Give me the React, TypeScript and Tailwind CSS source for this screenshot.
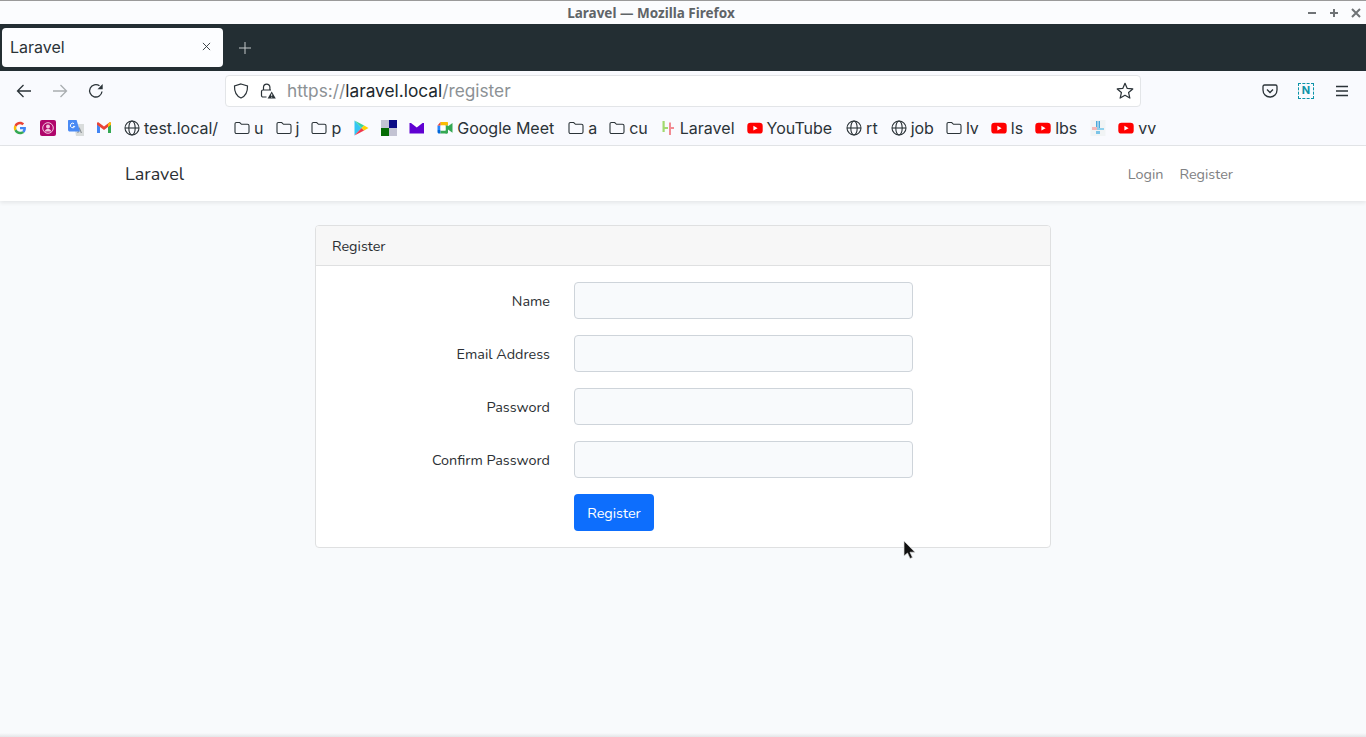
import React from 'react';

const Folder = () => (
  <svg width="16" height="16" viewBox="0 0 16 16" fill="none" stroke="#2b3338" strokeWidth="1.100">
    <path d="M1 3.800C1 3 1.600 2.500 2.400 2.500h3.300l1.800 1.800h6c.9 0 1.500.6 1.500 1.500v6.200c0 .9-.6 1.500-1.500 1.500h-11C1.600 13.500 1 12.900 1 12z" />
  </svg>
);

const Globe = () => (
  <svg width="16" height="16" viewBox="0 0 16 16" fill="none" stroke="#2b3338" strokeWidth="1.100">
    <circle cx="8" cy="8" r="7" />
    <ellipse cx="8" cy="8" rx="3.200" ry="7" />
    <path d="M1 8h14" />
  </svg>
);

const YouTube = () => (
  <svg width="16" height="16" viewBox="0 0 16 16">
    <rect x="0.300" y="2.800" width="15.400" height="10.800" rx="3.200" fill="#ff0000" />
    <path d="M6.400 5.800v4.800l4.200-2.400z" fill="#fff" />
  </svg>
);

const GoogleG = () => (
  <svg width="16" height="16" viewBox="-7 -7 62 62">
    <path fill="#EA4335" d="M24 9.500c3.500 0 6.700 1.300 9.100 3.500l6.800-6.800C35.800 2.400 30.200 0 24 0 14.600 0 6.500 5.400 2.600 13.200l7.900 6.200C12.400 13.600 17.700 9.500 24 9.500z" />
    <path fill="#4285F4" d="M47 24.500c0-1.600-.1-3.100-.4-4.500H24v9h12.900c-.6 3-2.200 5.500-4.700 7.200l7.700 6c4.500-4.200 7.100-10.300 7.100-17.700z" />
    <path fill="#FBBC05" d="M10.500 28.600c-.5-1.400-.8-3-.8-4.600s.3-3.200.8-4.600l-7.900-6.200C.9 16.500 0 20.100 0 24s.9 7.500 2.600 10.800z" />
    <path fill="#34A853" d="M24 48c6.500 0 11.900-2.100 15.900-5.800l-7.700-6c-2.200 1.400-4.900 2.300-8.200 2.300-6.300 0-11.600-4.100-13.500-9.900l-7.900 6.100C6.500 42.600 14.600 48 24 48z" />
  </svg>
);

const Podcast = () => (
  <svg width="16" height="16" viewBox="0 0 16 16">
    <rect width="16" height="16" rx="2" fill="#b0066c" />
    <circle cx="8" cy="8" r="5.300" fill="none" stroke="#f3c6df" strokeWidth="1" />
    <circle cx="8" cy="6.400" r="2" fill="#f3c6df" />
    <path d="M4.600 11.500c.6-1.900 2-2.700 3.400-2.700s2.800.8 3.400 2.700z" fill="#f3c6df" />
  </svg>
);

const Translate = () => (
  <svg width="16" height="16" viewBox="0 0 16 16">
    <path d="M6 4h10v12H8z" fill="#d9dcdc" />
    <path d="M11.500 7l2.500 6h-1.200l-1.300-3.400L10.300 13H9.200z" fill="#8a9094" />
    <path d="M1 0h7.600L12 11.500H1.800C.8 11.500 0 10.700 0 9.700V1C0 .4.400 0 1 0z" fill="#4a8af4" />
    <path d="M6 3.600a2.300 2.300 0 1 0 .8 2.800H5" fill="none" stroke="#fff" strokeWidth="1" />
  </svg>
);

const Gmail = () => (
  <svg width="16" height="16" viewBox="0 0 16 16">
    <path d="M1 3.500v9.500h3V7z" fill="#4285f4" />
    <path d="M12 7v6h3V3.500z" fill="#34a853" />
    <path d="M1 3.200c0-.9 1-1.400 1.700-.8L8 6.500l5.300-4.100c.7-.6 1.700-.1 1.700.8v1.600L8 10 4 7 1 4.800z" fill="#ea4335" />
    <path d="M12 3.900l1.300-1.500c.7-.6 1.700-.1 1.700.8v1.600L12 7z" fill="#fbbc05" />
  </svg>
);

const Play = () => (
  <svg width="16" height="16" viewBox="0 0 16 16">
    <path d="M1.500 0.500v7.500h7z" fill="#33c6f4" />
    <path d="M1.500 15.500V8h7z" fill="#33c6f4" />
    <path d="M1.500 0.500L8.500 8l2.600-2.600z" fill="#3ad29f" />
    <path d="M1.500 15.500L8.500 8l2.600 2.600z" fill="#f0384c" />
    <path d="M11.100 5.400L15.500 8l-4.400 2.600L8.500 8z" fill="#ffd200" />
  </svg>
);

const Squares = () => (
  <svg width="16" height="16" viewBox="0 0 16 16">
    <rect width="8" height="8" fill="#c3c3d3" />
    <rect x="8" width="8" height="8" fill="#0b0b84" />
    <rect y="8" width="8" height="8" fill="#056b05" />
    <rect x="8" y="8" width="8" height="8" fill="#c3c3d3" />
  </svg>
);

const Mail = () => (
  <svg width="16" height="16" viewBox="0 0 16 16">
    <rect x="0.500" y="3" width="14.500" height="10.500" fill="#6001d2" />
    <path d="M2 3h11.500L7.750 7.500z" fill="#fff" />
  </svg>
);

const Meet = () => (
  <svg width="16" height="16" viewBox="0 0 16 16">
    <path d="M3.500 2H10v3.500H3.500z" fill="#fbbc04" />
    <path d="M0.500 5.500H3.500v4.500H0.500z" fill="#2684fc" />
    <path d="M3.500 2v3.500H0.500z" fill="#ea4335" />
    <path d="M0.500 10h3v3.500H2c-.9 0-1.500-.6-1.500-1.500z" fill="#0066da" />
    <path d="M3.500 10.500H10v3H3.500z" fill="#34a853" />
    <path d="M10 2c.6 0 1 .4 1 1v2.500H8.500V2z" fill="#fbbc04" />
    <path d="M8.500 5.500H11v7c0 .6-.4 1-1 1H8.500z" fill="#34a853" />
    <path d="M11 6.300l4.500-3.300v9.800L11 9.500z" fill="#34a853" />
    <rect x="3.500" y="5.500" width="5" height="5" fill="#fff" />
  </svg>
);

const LaravelH = () => (
  <svg width="16" height="16" viewBox="0 0 16 16">
    <path d="M2.500 1h2.200v6H8v2H4.700v3H2.500z" fill="#a2d96f" />
    <path d="M9 2.500h2v4.500h3v2h-3v6H9z" fill="#f28b93" />
  </svg>
);

const Slack = () => (
  <svg width="16" height="16" viewBox="0 0 16 16">
    <rect x="0.500" y="0" width="15" height="16" fill="#f1f4f5" />
    <rect x="6" y="1" width="1.500" height="7" fill="#4aa8dc" />
    <rect x="8.500" y="1" width="1.500" height="7" fill="#4aa8dc" />
    <rect x="2" y="7" width="5" height="3" fill="#f3b7b7" />
    <rect x="7" y="8" width="7" height="2" fill="#8fd0ec" />
    <rect x="6" y="11" width="4" height="3" fill="#7cc4e8" />
  </svg>
);

// extra: some labels run a little wider in the reference
const bookmarks: { icon: React.ReactNode; label?: string; extra?: string }[] = [
  { icon: <GoogleG /> },
  { icon: <Podcast /> },
  { icon: <Translate /> },
  { icon: <Gmail /> },
  { icon: <Globe />, label: 'test.local/', extra: 'mr-[4px]' },
  { icon: <Folder />, label: 'u' },
  { icon: <Folder />, label: 'j' },
  { icon: <Folder />, label: 'p' },
  { icon: <Play /> },
  { icon: <Squares /> },
  { icon: <Mail /> },
  { icon: <Meet />, label: 'Google Meet', extra: 'mr-[2px]' },
  { icon: <Folder />, label: 'a' },
  { icon: <Folder />, label: 'cu' },
  { icon: <LaravelH />, label: 'Laravel' },
  { icon: <YouTube />, label: 'YouTube', extra: 'mr-[2px]' },
  { icon: <Globe />, label: 'rt', extra: 'mr-[1px]' },
  { icon: <Globe />, label: 'job' },
  { icon: <Folder />, label: 'lv' },
  { icon: <YouTube />, label: 'ls' },
  { icon: <YouTube />, label: 'lbs', extra: 'mr-[1px]' },
  { icon: <Slack /> },
  { icon: <YouTube />, label: 'vv' },
];

const fields = ['Name', 'Email Address', 'Password', 'Confirm Password'];

const Toolbar = () => (
  <div className="flex h-[39px] items-center bg-[#f9fafe]">
    <div className="flex w-[225px] items-center gap-[20px] pl-[16px]">
      {/* Back, forward, reload */}
      <svg width="16" height="16" viewBox="0 0 16 16" fill="none" stroke="#2b3338" strokeWidth="1.300">
        <path d="M15 8H1.500M7.500 2L1.500 8l6 6" />
      </svg>
      <svg width="16" height="16" viewBox="0 0 16 16" fill="none" stroke="#a9adb0" strokeWidth="1.300">
        <path d="M1 8h13.500M8.500 2l6 6-6 6" />
      </svg>
      <svg width="16" height="16" viewBox="0 0 16 16" fill="none" stroke="#2b3338" strokeWidth="1.300">
        <path d="M14 8.500A6.200 6.200 0 1 1 11.500 2.800" />
        <path d="M14.700 1v5.200H9.500z" fill="#2b3338" stroke="none" />
      </svg>
    </div>
    {/* URL bar */}
    <div className="flex h-[32px] w-[916px] items-center rounded-[4px] border border-[#e3e5e8] bg-white px-[7px]">
      <svg width="16" height="16" viewBox="0 0 16 16" fill="none" stroke="#2b3338" strokeWidth="1.200">
        <path d="M8 1l6.500 2c.2 5.500-1.300 9.800-6.500 12C2.800 12.800 1.300 8.500 1.500 3z" />
      </svg>
      <svg className="ml-[11px]" width="16" height="16" viewBox="0 0 16 16" fill="none" stroke="#2b3338" strokeWidth="1.200">
        <path d="M3.500 7V4.300a3.200 3.200 0 0 1 6.400 0V7" />
        <path d="M6.500 14H3A1.500 1.500 0 0 1 1.500 12.500V8.500A1.500 1.500 0 0 1 3 7h8" />
        <path d="M11.700 8.500l4.100 7H7.600z" fill="#2b3338" stroke="none" />
        <path d="M11.700 10.800v2.200M11.700 13.800v.8" stroke="#fff" strokeWidth="0.900" />
      </svg>
      <div className="ml-[11px] flex-1 font-['Inter',sans-serif] text-[17.300px] leading-[28px] text-[#8c9195]">
        https://<span className="text-[#20282d]">laravel.local</span>/register
      </div>
      <svg className="mr-[-1px]" width="18" height="18" viewBox="0 0 16 16" fill="none" stroke="#2b3338" strokeWidth="1.100">
        <path d="M8 1.200l2 4.500 4.900.5-3.700 3.200 1.100 4.900L8 11.800l-4.300 2.500 1.100-4.900L1.100 6.200 6 5.700z" strokeLinejoin="round" />
      </svg>
    </div>
    {/* Pocket, extension, menu */}
    <div className="flex flex-1 items-center justify-end gap-[20px] pr-[16px]">
      <svg width="16" height="16" viewBox="0 0 16 16" fill="none" stroke="#2b3338" strokeWidth="1.300">
        <path d="M2.500 2h11C14.400 2 15 2.600 15 3.500V7c0 4-3 7-7 7s-7-3-7-7V3.500C1 2.600 1.600 2 2.500 2z" />
        <path d="M5 6.500L8 9.500l3-3" />
      </svg>
      <div className="flex h-[16px] w-[16px] items-center justify-center border border-dashed border-[#0d93a8] font-['Inter',sans-serif] text-[11px] leading-none font-bold text-[#0d93a8]">
        N
      </div>
      <svg width="16" height="16" viewBox="0 0 16 16" fill="none" stroke="#2b3338" strokeWidth="1.300">
        <path d="M2 3.500h12M2 8h12M2 12.500h12" />
      </svg>
    </div>
  </div>
);

export default function App() {
  return (
    <div className="relative flex h-[737px] w-full flex-col overflow-hidden bg-[#f8fafc]">
      {/* Window title */}
      <div className="flex h-[24px] items-center border-t border-[#9a9a9a] bg-[#fbfcfe]">
        <div className="w-[36px]" />
        <div className="flex-1 pt-[2px] text-center font-['Noto_Sans',sans-serif] text-[13.500px] font-bold text-[#5f6468]">
          Laravel — Mozilla Firefox
        </div>
        <div className="flex w-[100px] items-center justify-end gap-[10px] pr-[4px]">
          <svg width="12" height="12" viewBox="0 0 12 12" stroke="#6f7376" strokeWidth="2"><path d="M2 6h8" /></svg>
          <svg width="12" height="12" viewBox="0 0 12 12" stroke="#6f7376" strokeWidth="2"><path d="M2 6h8M6 2v8" /></svg>
          <svg width="12" height="12" viewBox="0 0 12 12" stroke="#6f7376" strokeWidth="2"><path d="M2 2l8 8M10 2l-8 8" /></svg>
        </div>
      </div>

      {/* Tab strip */}
      <div className="flex h-[47px] items-center bg-[#232e33] pl-[2px]">
        <div className="flex h-[39px] w-[221px] items-center justify-between rounded-[4px] bg-[#fcfdff] pr-[12px] pb-[2px] pl-[8px]">
          <span className="font-['Inter',sans-serif] text-[16px] text-[#2b3338]">Laravel</span>
          <svg width="9" height="9" viewBox="0 0 10 10" stroke="#2b3338" strokeWidth="1"><path d="M1 1l8 8M9 1l-8 8" /></svg>
        </div>
        <svg className="ml-[15px]" width="14" height="14" viewBox="0 0 14 14" stroke="#c4c8ca" strokeWidth="1"><path d="M1 7h12M7 1v12" /></svg>
      </div>

      <Toolbar />

      {/* Bookmarks */}
      <div className="flex h-[36px] items-center gap-[12px] border-b border-[#e3e5e8] bg-[#f9fafe] pl-[12px] font-['Inter',sans-serif] text-[16px] text-[#2b3338]">
        {bookmarks.map((b, i) => (
          <div key={i} className={`flex items-center gap-[4px] whitespace-nowrap ${b.extra ?? ''}`}>
            {b.icon}
            {b.label && <span>{b.label}</span>}
          </div>
        ))}
      </div>

      {/* Page navbar */}
      <nav className="flex h-[55px] items-center justify-between bg-white pt-[2px] pr-[133px] pl-[125px] font-['Nunito','Lato',sans-serif] shadow-[0_2px_4px_rgba(0,0,0,0.08)]">
        <span className="text-[18px] text-[#2b2f33]">Laravel</span>
        <div className="flex gap-[16px] text-[14.400px] text-[#7f8183]">
          <span>Login</span>
          <span>Register</span>
        </div>
      </nav>

      {/* Register card */}
      <div className="flex justify-center pt-[24px] font-['Nunito','Lato',sans-serif] text-[14.400px] text-[#2b2f33]">
        <div className="w-[736px] overflow-hidden rounded-[4px] border border-[#dfe0e1] bg-white">
          <div className="flex h-[40px] items-center border-b border-[#dfe0e1] bg-[#f7f7f7] pt-[2px] pl-[16px]">Register</div>
          <div className="flex flex-col gap-[16px] p-[16px]">
            {fields.map(f => (
              <div key={f} className="flex items-center">
                <label className="w-[218px] pt-[2px] text-right">{f}</label>
                <input className="ml-[24px] h-[37px] w-[339px] rounded-[4px] border border-[#ced4da] bg-[#f8fafc]" />
              </div>
            ))}
            <div className="pl-[242px]">
              <button className="h-[37px] w-[80px] rounded-[4px] bg-[#0d6efd] pt-[2px] text-white">Register</button>
            </div>
          </div>
        </div>
      </div>

      {/* Mouse pointer */}
      <svg className="absolute top-[540px] left-[903px]" width="14" height="20" viewBox="0 0 14 20">
        <path d="M1 1v15l3.500-3 2.500 5.500 2.500-1-2.500-5.300H12z" fill="#111" stroke="#ddd" strokeWidth="0.700" />
      </svg>

      {/* Shadow along the window's bottom edge */}
      <div className="absolute right-0 bottom-0 left-0 h-[4px] bg-gradient-to-b from-transparent to-[#e4e6e8]" />
    </div>
  );
}
